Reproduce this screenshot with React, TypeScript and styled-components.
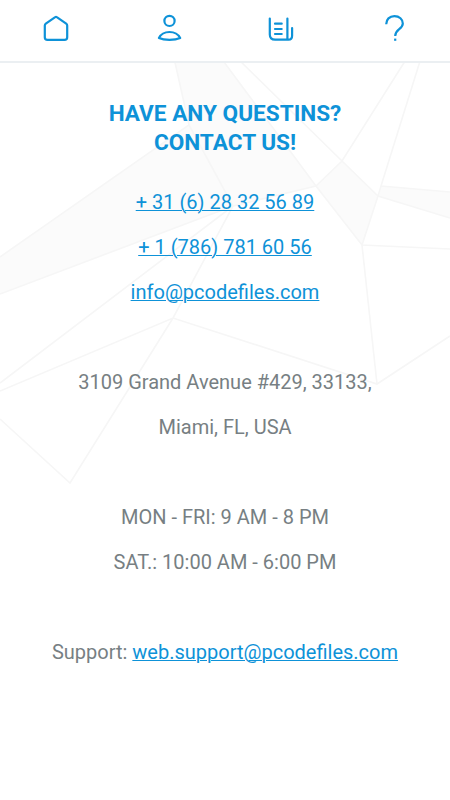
import React from 'react';
import styled, { createGlobalStyle } from 'styled-components';

const blue = '#0e92d8';

const GlobalStyle = createGlobalStyle`
  *, *::before, *::after { box-sizing: border-box; }
  body { margin: 0; background: #fff; font-family: Roboto, sans-serif; }
`;

const Page = styled.div`
  position: relative;
  min-height: 800px;
  background: #fff;
  overflow: hidden;
`;

const Backdrop = styled.svg`
  position: absolute;
  inset: 0;
  width: 450px;
  height: 500px;
  pointer-events: none;
`;

const NavBar = styled.nav`
  position: relative;
  display: grid;
  grid-template-columns: repeat(4, 1fr);
  height: 63px;
  padding-top: 13px;
  background: #fff;
  border-bottom: 2px solid #ebeff2;
`;

const NavLink = styled.a`
  display: flex;
  justify-content: center;
  align-items: flex-start;
  color: ${blue};
`;

const NavIcon = styled.svg`
  width: 30px;
  height: 30px;
  fill: none;
  stroke: currentColor;
  stroke-width: 2.2;
  stroke-linejoin: round;
  stroke-linecap: round;
`;

const Content = styled.main`
  position: relative;
  padding-top: 36px;
  text-align: center;
`;

const Title = styled.h1`
  margin: 0 0 23px;
  color: ${blue};
  font-size: 22.6px;
  font-weight: 700;
  line-height: 29px;
`;

const Group = styled.section`
  margin-bottom: 45px;
  color: #777f83;
  font-size: 20px;
  line-height: 45px;
`;

const Line = styled.p`
  margin: 0;
  white-space: nowrap;
`;

const TextLink = styled.a`
  color: ${blue};
  text-decoration: underline;
  text-decoration-thickness: 1px;
`;

export default function App() {
  return (
    <Page>
      <GlobalStyle />
      <Backdrop viewBox="0 0 450 500" aria-hidden="true">
        <g fill="#fbfbfb">
          <path d="M174 58L189 125L0 257V294L233 206L316 186L221 58Z" />
          <path d="M316 186L342 161L378 196L362 245Z" />
          <path d="M381 186L450 192V218L378 196Z" />
        </g>
        <g fill="none" stroke="#f6f6f6" strokeWidth="1.6">
          <path d="M174 58L189 125L0 257M189 125L233 206L316 186L221 58" />
          <path d="M0 294L233 206L0 383M233 206L173 318L70 483L0 419M0 391L173 318L377 384L450 336" />
          <path d="M237 58L342 161L378 196L450 218M407 58L342 161L316 186L362 245L450 249" />
          <path d="M421 58L381 186L378 196L362 245L377 384M381 186L450 192" />
        </g>
      </Backdrop>
      <NavBar>
        <NavLink href="#home" aria-label="Home">
          <NavIcon viewBox="0 0 30 30">
            <path d="M3.8 12.5Q3.8 11.3 4.8 10.6L14.2 4.2Q15 3.6 15.8 4.2L25.2 10.6Q26.2 11.3 26.2 12.5V24.2Q26.2 26.9 23.5 26.9H6.5Q3.8 26.9 3.8 24.2Z" />
          </NavIcon>
        </NavLink>
        <NavLink href="#profile" aria-label="Profile">
          <NavIcon viewBox="0 0 30 30">
            <circle cx="15.5" cy="7.9" r="5.1" />
            <path d="M4.9 25Q8 19 15.5 19Q23 19 26.2 25Q22 26.9 15.5 26.9Q9 26.9 4.9 25Z" />
          </NavIcon>
        </NavLink>
        <NavLink href="#news" aria-label="News">
          <NavIcon viewBox="0 0 30 30">
            <path d="M3.8 5.6V21.5Q3.8 26.7 9.2 26.7H22.5Q26.1 26.7 26.1 22.8V15M21.4 5.6V26M9 10.7H15.7M9 16H15.7M9 21H15.7" />
          </NavIcon>
        </NavLink>
        <NavLink href="#help" aria-label="Help">
          <NavIcon viewBox="0 0 30 30">
            <path strokeLinecap="butt" d="M7.2 11.2C7.2 6.5 10.5 3.1 15.4 3.1C20.4 3.1 23.8 6.3 23.8 10.4C23.8 16.2 16.2 16.2 16.2 22.9" />
            <path stroke="none" fill="currentColor" d="M15.1 25.6h2.2v2.2h-2.2z" />
          </NavIcon>
        </NavLink>
      </NavBar>
      <Content>
        <Title>
          HAVE ANY QUESTINS?
          <br />
          CONTACT US!
        </Title>
        <Group>
          <Line><TextLink href="tel:+31628325689">+ 31 (6) 28 32 56 89</TextLink></Line>
          <Line><TextLink href="tel:+17867816056">+ 1 (786) 781 60 56</TextLink></Line>
          <Line><TextLink href="mailto:info@pcodefiles.com">info@pcodefiles.com</TextLink></Line>
        </Group>
        <Group>
          <Line>3109 Grand Avenue #429, 33133,</Line>
          <Line>Miami, FL, USA</Line>
        </Group>
        <Group>
          <Line>MON - FRI: 9 AM - 8 PM</Line>
          <Line>SAT.: 10:00 AM - 6:00 PM</Line>
        </Group>
        <Group>
          <Line>
            Support: <TextLink href="mailto:web.support@pcodefiles.com">web.support@pcodefiles.com</TextLink>
          </Line>
        </Group>
      </Content>
    </Page>
  );
}
